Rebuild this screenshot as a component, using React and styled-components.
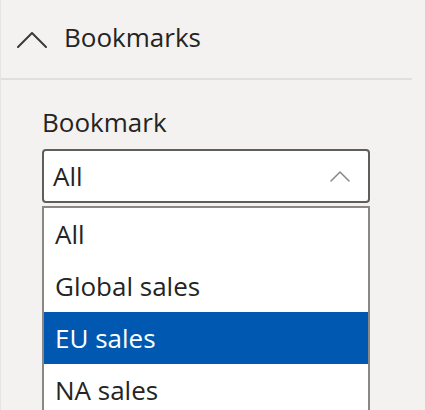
import React from 'react';
import styled, { createGlobalStyle } from 'styled-components';

const GlobalStyle = createGlobalStyle`
  html, body {
    margin: 0;
    padding: 0;
    background: #f3f2f1;
    overflow: hidden;
  }
  body {
    font-family: "Open Sans", "Noto Sans", sans-serif;
    color: #252423;
  }
`;

const Pane = styled.div`
  width: 425px;
  height: 410px;
  box-sizing: border-box;
  border-left: 1px solid #e6e4e2;
  overflow: hidden;
`;

const Header = styled.div`
  height: 78px;
  display: flex;
  align-items: center;
  gap: 17px;
  padding-left: 16px;
`;

const Title = styled.span`
  font-size: 26px;
  line-height: 1;
  margin-top: -4px;
`;

const HeaderIcon = styled.span`
  display: flex;
  margin-top: 2px;
`;

const Divider = styled.hr`
  width: 412px;
  margin: 0;
  border: none;
  height: 2px;
  background: #e1dfdd;
  margin-left: -1px;
`;

const Section = styled.div`
  padding: 26px 0 0 41px;
  width: 328px;
`;

const Label = styled.div`
  font-size: 26px;
  line-height: 32px;
  margin-bottom: 11px;
`;

const Select = styled.div`
  height: 54px;
  box-sizing: border-box;
  border: 2px solid #605e5c;
  border-radius: 4px;
  background: #fff;
  display: flex;
  align-items: center;
  justify-content: space-between;
  padding: 0 18px 0 9px;
  font-size: 26px;
`;

const List = styled.div`
  margin-top: 3px;
  border: 2px solid #8a8886;
  border-bottom: none;
  background: #fff;
`;

const Option = styled.div`
  height: 52px;
  display: flex;
  align-items: center;
  padding-left: 11px;
  font-size: 26px;
  background: ${(p) => (p.selected ? '#0058b0' : 'transparent')};
  color: ${(p) => (p.selected ? '#fff' : '#252423')};
`;

const Chevron = ({ width, height, color, stroke }) => (
  <svg width={width} height={height} viewBox={`0 0 ${width} ${height}`} fill="none">
    <polyline
      points={`1,${height - 1} ${width / 2},1 ${width - 1},${height - 1}`}
      stroke={color}
      strokeWidth={stroke}
      strokeLinecap="round"
      strokeLinejoin="round"
    />
  </svg>
);

const options = ['All', 'Global sales', 'EU sales', 'NA sales'];

export default function App() {
  return (
    <Pane>
      <GlobalStyle />
      <Header>
        <HeaderIcon>
          <Chevron width={30} height={16} color="#3b3a39" stroke={2} />
        </HeaderIcon>
        <Title>Bookmarks</Title>
      </Header>
      <Divider />
      <Section>
        <Label>Bookmark</Label>
        <Select>
          <span>All</span>
          <Chevron width={20} height={11} color="#8a8886" stroke={1.5} />
        </Select>
        <List>
          {options.map((o) => (
            <Option key={o} selected={o === 'EU sales'}>{o}</Option>
          ))}
        </List>
      </Section>
    </Pane>
  );
}
